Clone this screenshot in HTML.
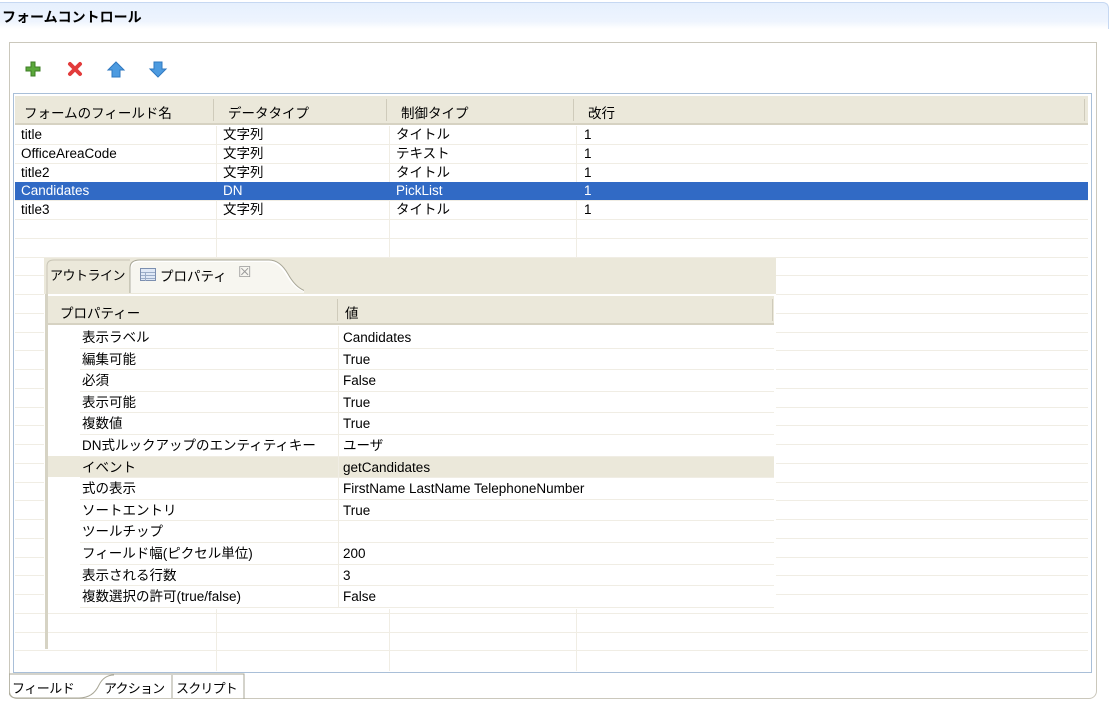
<!DOCTYPE html>
<html><head><meta charset="utf-8">
<style>
*{margin:0;padding:0;box-sizing:border-box}
body{width:1112px;height:714px;background:#fff;position:relative;overflow:hidden;font-family:"Liberation Sans","Noto Sans CJK JP",sans-serif;font-size:13.5px;color:#000}
.a{position:absolute;white-space:nowrap}
.hl{position:absolute;height:1px;background:#f0ede4}
.vl{position:absolute;width:1px;background:#f0ede4}
</style></head><body>
<div class="a" style="left:0;top:2px;width:1109px;height:27px;border:1px solid #c6d8f2;border-bottom:none;border-left:none;border-radius:0 6px 0 0;background:linear-gradient(#e6f0fd,#eef4fe 70%,#fff)"></div>
<div class="a" style="left:2px;top:7px;font-weight:bold;font-size:14px">フォームコントロール</div>
<div class="a" style="left:9px;top:42px;width:1088px;height:657px;border:1px solid #cbc8bc;border-radius:0 0 8px 8px"></div>
<svg class="a" style="left:24px;top:58px" width="150" height="22">
<path d="M7 4h4v5h5v4h-5v5h-4v-5h-5v-4h5z" fill="#5aa83a" stroke="#3d7d24" stroke-width="1"/>
<path d="M46 6l10 10M56 6l-10 10" stroke="#e23b3b" stroke-width="4" stroke-linecap="round"/>
<path d="M92 4l8 8h-4v7h-8v-7h-4z" fill="#4d9be0" stroke="#2f78c0"/>
<path d="M134 19l8-8h-4v-7h-8v7h-4z" fill="#4d9be0" stroke="#2f78c0"/>
</svg>
<div class="a" style="left:13px;top:93px;width:1079px;height:580px;border:1px solid #a9bfd8;background:#fff"></div>
<div class="a" style="left:15px;top:96px;width:1073px;height:29px;background:#ebe8da;border-bottom:2px solid #d6d2c2"></div>
<div class="a" style="left:213px;top:99px;width:1px;height:22px;background:#cfcbbb"></div>
<div class="a" style="left:386px;top:99px;width:1px;height:22px;background:#cfcbbb"></div>
<div class="a" style="left:573px;top:99px;width:1px;height:22px;background:#cfcbbb"></div>
<div class="a" style="left:1084px;top:99px;width:1px;height:22px;background:#cfcbbb"></div>
<div class="a" style="left:24px;top:102px">フォームのフィールド名</div>
<div class="a" style="left:228px;top:102px">データタイプ</div>
<div class="a" style="left:401px;top:102px">制御タイプ</div>
<div class="a" style="left:588px;top:102px">改行</div>
<div id="mt"></div>
<div class="a" style="left:15px;top:182px;width:1073px;height:18px;background:#316ac5"></div>
<div class="a" style="left:21px;top:126px;line-height:18.75px">title<br>OfficeAreaCode<br>title2<br><span style="color:#fff">Candidates</span><br>title3</div>
<div class="a" style="left:223px;top:126px;line-height:18.75px">文字列<br>文字列<br>文字列<br><span style="color:#fff">DN</span><br>文字列</div>
<div class="a" style="left:396px;top:126px;line-height:18.75px">タイトル<br>テキスト<br>タイトル<br><span style="color:#fff">PickList</span><br>タイトル</div>
<div class="a" style="left:584px;top:126px;line-height:18.75px">1<br>1<br>1<br><span style="color:#fff">1</span><br>1</div>
<div class="a" style="left:44px;top:258px;width:732px;height:351px;background:#fff"></div>
<div class="a" style="left:44px;top:258px;width:732px;height:36px;background:#ebe8da"></div>
<svg class="a" style="left:44px;top:258px" width="260" height="36">
<path d="M86 35V10Q86 2 96 2H225Q236 2 244 16Q254 34 268 34" fill="#fff" stroke="#a9a797"/>
<path d="M87 35V12Q87 4 96 4H224Q234 4 242 17Q252 35 268 35Z" fill="#f7f6f0"/>
<path d="M3 36V8Q3 2 10 2H86" fill="none" stroke="#c8c5b6"/>
</svg>
<div class="a" style="left:50px;top:265px;font-size:13px;letter-spacing:-0.5px">アウトライン</div>
<svg class="a" style="left:140px;top:268px" width="16" height="14"><rect x="0.5" y="0.5" width="15" height="12" fill="#dfe8f6" stroke="#7c8fb0"/><path d="M1 4.5h14M1 7.5h14M1 10.5h14M5.5 4v9" stroke="#9aacc8"/></svg>
<div class="a" style="left:160px;top:265px">プロパティ</div>
<div class="a" style="left:238px;top:263px;color:#9a9a9a;font-size:15px">☒</div>
<div class="a" style="left:45px;top:294px;width:3px;height:355px;background:#d6d3c4"></div>
<div class="a" style="left:48px;top:296px;width:726px;height:29px;background:#ebe8da;border-bottom:2px solid #d6d2c2"></div>
<div class="a" style="left:337px;top:299px;width:1px;height:22px;background:#cfcbbb"></div>
<div class="a" style="left:772px;top:299px;width:1px;height:22px;background:#cfcbbb"></div>
<div class="a" style="left:60px;top:302px">プロパティー</div>
<div class="a" style="left:345px;top:302px">値</div>
<div class="a" style="left:48px;top:456px;width:726px;height:21px;background:#ebe8da"></div>
<div id="pt"></div>
<div class="a" style="left:82px;top:327px;line-height:21.6px">表示ラベル<br>編集可能<br>必須<br>表示可能<br>複数値<br>DN式ルックアップのエンティティキー<br>イベント<br>式の表示<br>ソートエントリ<br>ツールチップ<br>フィールド幅(ピクセル単位)<br>表示される行数<br>複数選択の許可(true/false)</div>
<div class="a" style="left:343px;top:327px;line-height:21.6px">Candidates<br>True<br>False<br>True<br>True<br>ユーザ<br>getCandidates<br>FirstName LastName TelephoneNumber<br>True<br>&nbsp;<br>200<br>3<br>False</div>
<svg class="a" style="left:9px;top:673px" width="240" height="27">
<path d="M0 1H235V26" fill="none" stroke="#a9a797"/>
<path d="M0 1V18Q0 25 8 25H70Q84 25 90 12Q95 2 105 2" fill="none" stroke="#a9a797"/>
<path d="M163 2V25" stroke="#a9a797"/>
</svg>
<div class="a" style="left:12px;top:678px;font-size:13px;letter-spacing:-0.5px">フィールド</div>
<div class="a" style="left:104px;top:678px;font-size:13px;letter-spacing:-0.8px">アクション</div>
<div class="a" style="left:176px;top:678px;font-size:13px;letter-spacing:-0.8px">スクリプト</div>
<script>
var m=document.getElementById('mt'),h='';
for(var i=0;i<28;i++){var y=Math.round(144+i*18.75);if(y>660)break;h+='<div class="hl" style="left:15px;top:'+y+'px;width:1073px"></div>';}
[216,389,576].forEach(function(x){h+='<div class="vl" style="left:'+x+'px;top:126px;height:545px"></div>';});
m.outerHTML=h;
var p=document.getElementById('pt'),g='';
for(var j=1;j<=13;j++){var yy=Math.round(326+j*21.6);g+='<div class="hl" style="left:80px;top:'+yy+'px;width:694px"></div>';}
g+='<div class="vl" style="left:338px;top:326px;height:282px"></div>';
p.outerHTML=g;
</script>
</body></html>
